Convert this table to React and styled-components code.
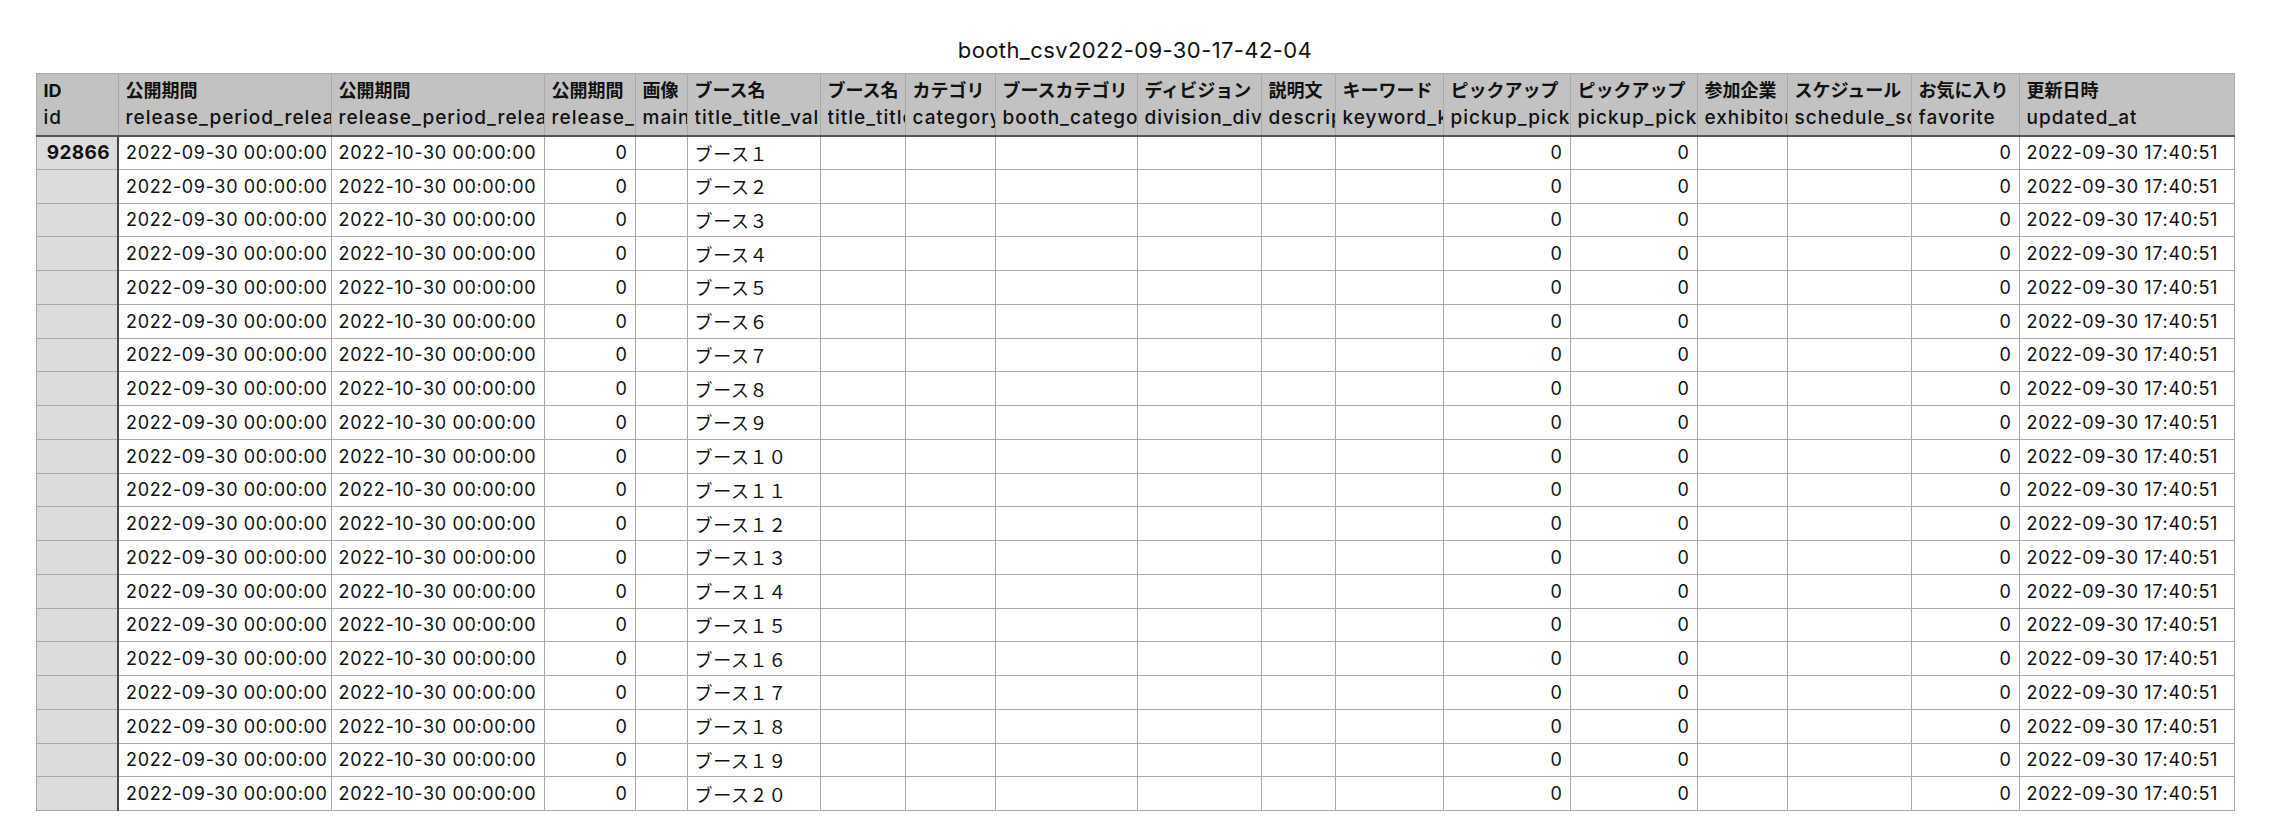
import React from "react";
import styled, { createGlobalStyle } from "styled-components";

const GlobalStyle = createGlobalStyle`
  html, body { margin: 0; padding: 0; background: #ffffff; }
  body {
    font-family: Inter, "Noto Sans CJK JP", sans-serif;
    color: #111;
  }
`;

const Page = styled.div`
  width: 2270px;
  display: flex;
  flex-direction: column;
  align-items: center;
`;

const Title = styled.h1`
  margin: 0;
  padding-top: 38px;
  height: 35px;
  font-size: 22px;
  line-height: 24px;
  letter-spacing: 0.4px;
  font-weight: 400;
  color: #111;
  font-family: Inter, "Noto Sans CJK JP", sans-serif;
`;

const Table = styled.table`
  table-layout: fixed;
  border-collapse: collapse;
  width: 2198px;
  font-family: Inter, "Noto Sans CJK JP", sans-serif;
`;

const HeadCell = styled.th`
  background: #c1c2c1;
  border: 1.5px solid #a9a9a9;
  border-bottom: 2px solid #555;
  height: 62px;
  padding: 0 0 0 7px;
  text-align: left;
  vertical-align: middle;
  overflow: hidden;
  white-space: nowrap;
  box-sizing: border-box;
`;

const HeadLine = styled.div`
  font-size: ${(p) => (p.$jp ? "18px" : "19px")};
  line-height: 27px;
  letter-spacing: ${(p) => (p.$jp ? "0" : "1px")};
  font-weight: ${(p) => (p.$jp ? 700 : 500)};
  color: #111;
  overflow: hidden;
  white-space: nowrap;
  text-overflow: clip;
`;

const Cell = styled.td`
  background: ${(p) => (p.$id ? "#dcdcdc" : "#ffffff")};
  border: 1.5px solid #a9a9a9;
  border-right: ${(p) => (p.$id ? "2px solid #444" : "1.5px solid #a9a9a9")};
  height: 33.75px;
  padding: 0 7px;
  font-size: ${(p) => (p.$id ? "19px" : "18px")};
  letter-spacing: ${(p) => (p.$id ? "0.4px" : "0.65px")};
  font-weight: ${(p) => (p.$id ? 700 : 400)};
  text-align: ${(p) => (p.$right ? "right" : "left")};
  white-space: nowrap;
  overflow: hidden;
  color: #111;
  box-sizing: border-box;
`;

const widths = [82, 213, 213, 91, 52, 133, 85, 90, 142, 124, 74, 108, 127, 127, 90, 124, 108, 215];

const headers = [
  ["ID", "id"],
  ["公開期間", "release_period_release_start"],
  ["公開期間", "release_period_release_end"],
  ["公開期間", "release_period_flag"],
  ["画像", "main_image"],
  ["ブース名", "title_title_value"],
  ["ブース名", "title_title_value_en"],
  ["カテゴリ", "category"],
  ["ブースカテゴリ", "booth_category"],
  ["ディビジョン", "division_division"],
  ["説明文", "description"],
  ["キーワード", "keyword_keyword"],
  ["ピックアップ", "pickup_pickup"],
  ["ピックアップ", "pickup_pickup_order"],
  ["参加企業", "exhibitor"],
  ["スケジュール", "schedule_schedule"],
  ["お気に入り", "favorite"],
  ["更新日時", "updated_at"],
];

const toFull = (n) =>
  String(n)
    .split("")
    .map((c) => String.fromCharCode(c.charCodeAt(0) + 0xfee0))
    .join("");

const rows = Array.from({ length: 20 }, (_, i) => ({
  id: i === 0 ? "92866" : "",
  name: "ブース" + toFull(i + 1),
}));

export default function App() {
  return (
    <>
      <GlobalStyle />
      <Page>
        <Title>booth_csv2022-09-30-17-42-04</Title>
        <Table>
          <colgroup>
            {widths.map((w, i) => (
              <col key={i} style={{ width: w }} />
            ))}
          </colgroup>
          <thead>
            <tr>
              {headers.map(([jp, en], i) => (
                <HeadCell key={i}>
                  <HeadLine $jp>{jp}</HeadLine>
                  <HeadLine>{en}</HeadLine>
                </HeadCell>
              ))}
            </tr>
          </thead>
          <tbody>
            {rows.map((r, i) => (
              <tr key={i}>
                <Cell $id $right>{r.id}</Cell>
                <Cell>2022-09-30 00:00:00</Cell>
                <Cell>2022-10-30 00:00:00</Cell>
                <Cell $right>0</Cell>
                <Cell />
                <Cell>{r.name}</Cell>
                <Cell />
                <Cell />
                <Cell />
                <Cell />
                <Cell />
                <Cell />
                <Cell $right>0</Cell>
                <Cell $right>0</Cell>
                <Cell />
                <Cell />
                <Cell $right>0</Cell>
                <Cell>2022-09-30 17:40:51</Cell>
              </tr>
            ))}
          </tbody>
        </Table>
      </Page>
    </>
  );
}
